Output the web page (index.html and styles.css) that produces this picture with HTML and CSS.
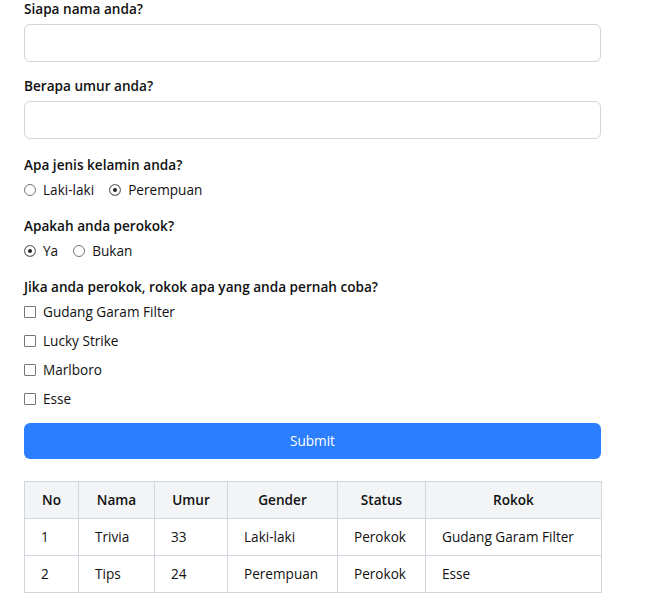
FILE: index.html
```html
<!DOCTYPE html>
<html lang="id">
<head>
<meta charset="utf-8">
<title>Form Perokok</title>
<link rel="stylesheet" href="styles.css">
</head>
<body>
<main class="page">
  <form class="form">
    <div class="group group-first">
      <label class="q" for="nama">Siapa nama anda?</label>
      <input class="text-input" id="nama" type="text">
    </div>
    <div class="group group-second">
      <label class="q" for="umur">Berapa umur anda?</label>
      <input class="text-input" id="umur" type="text">
    </div>
    <div class="group">
      <div class="q">Apa jenis kelamin anda?</div>
      <div class="choice-row">
        <label class="choice"><input type="radio" name="gender" class="radio"><span>Laki-laki</span></label>
        <label class="choice"><input type="radio" name="gender" class="radio" checked><span>Perempuan</span></label>
      </div>
    </div>
    <div class="group">
      <div class="q">Apakah anda perokok?</div>
      <div class="choice-row">
        <label class="choice"><input type="radio" name="perokok" class="radio" checked><span>Ya</span></label>
        <label class="choice"><input type="radio" name="perokok" class="radio"><span>Bukan</span></label>
      </div>
    </div>
    <div class="group">
      <div class="q">Jika anda perokok, rokok apa yang anda pernah coba?</div>
      <div class="check-list">
        <label class="choice"><input type="checkbox" class="check"><span>Gudang Garam Filter</span></label>
        <label class="choice"><input type="checkbox" class="check"><span>Lucky Strike</span></label>
        <label class="choice"><input type="checkbox" class="check"><span>Marlboro</span></label>
        <label class="choice"><input type="checkbox" class="check"><span>Esse</span></label>
      </div>
    </div>
    <button type="button" class="submit">Submit</button>
  </form>

  <table class="data">
    <colgroup>
      <col class="c-no"><col class="c-nama"><col class="c-umur"><col class="c-gender"><col class="c-status"><col class="c-rokok">
    </colgroup>
    <thead>
      <tr><th>No</th><th>Nama</th><th>Umur</th><th>Gender</th><th>Status</th><th>Rokok</th></tr>
    </thead>
    <tbody>
      <tr><td>1</td><td>Trivia</td><td>33</td><td>Laki-laki</td><td>Perokok</td><td>Gudang Garam Filter</td></tr>
      <tr><td>2</td><td>Tips</td><td>24</td><td>Perempuan</td><td>Perokok</td><td>Esse</td></tr>
    </tbody>
  </table>
</main>
</body>
</html>
```
FILE: styles.css
```css
* { box-sizing: border-box; }
html, body { margin: 0; padding: 0; background: #fff; }
body {
  font-family: "Open Sans", "Noto Sans", sans-serif;
  font-size: 13.6px;
  line-height: 20px;
  color: #111;
}
.page {
  width: 577px;
  margin-left: 24px;
}
.form { display: flex; flex-direction: column; }
.group { display: flex; flex-direction: column; margin-top: 17px; }
.group-first { margin-top: 0; }
.group-second { margin-top: 15px; }
.q {
  display: block;
  font-weight: 600;
  line-height: 18px;
  margin-bottom: 6px;
  color: #101010;
}
.text-input {
  display: block;
  width: 100%;
  height: 38px;
  border: 1px solid #d1d5dc;
  border-radius: 6px;
  padding: 0 12px;
  font: inherit;
  background: #fff;
  outline: none;
}
.choice-row { display: flex; gap: 15px; }
.choice {
  display: flex;
  align-items: center;
  gap: 7px;
  height: 20px;
  cursor: pointer;
}
.check-list { display: flex; flex-direction: column; gap: 9px; }
.radio, .check {
  appearance: none;
  -webkit-appearance: none;
  margin: 0;
  width: 12px;
  height: 12px;
  border: 1px solid #767676;
  background: #fff;
  flex: none;
}
.radio { border-radius: 50%; }
.radio:checked {
  background: #222;
  box-shadow: inset 0 0 0 3px #fff;
}
.check { border-radius: 1px; }
.submit {
  margin-top: 14px;
  height: 36px;
  width: 100%;
  border: 0;
  border-radius: 6px;
  background: #2b7fff;
  color: #fff;
  font: inherit;
  cursor: pointer;
}
.data {
  margin-top: 22px;
  width: 577px;
  border-collapse: collapse;
  table-layout: fixed;
}
.c-no { width: 54px; }
.c-nama { width: 76px; }
.c-umur { width: 73px; }
.c-gender { width: 110px; }
.c-status { width: 88px; }
.c-rokok { width: 176px; }
.data th, .data td {
  border: 1px solid #d1d5dc;
  padding: 8px 16px;
  line-height: 20px;
  white-space: nowrap;
}
.data th {
  background: #f3f4f6;
  font-weight: 600;
  text-align: center;
}
.data td { text-align: left; }
```
